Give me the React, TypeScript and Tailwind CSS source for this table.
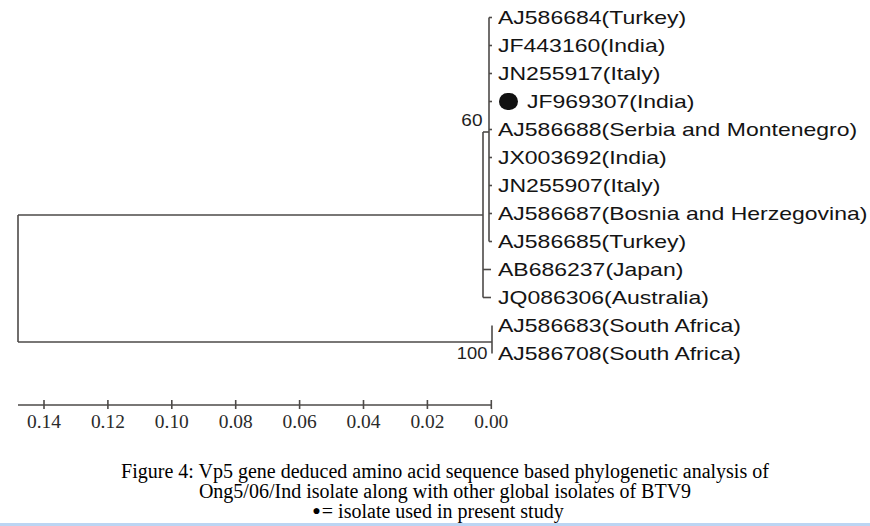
import React from "react";

const labels = [
  "AJ586684(Turkey)",
  "JF443160(India)",
  "JN255917(Italy)",
  "JF969307(India)",
  "AJ586688(Serbia and Montenegro)",
  "JX003692(India)",
  "JN255907(Italy)",
  "AJ586687(Bosnia and Herzegovina)",
  "AJ586685(Turkey)",
  "AB686237(Japan)",
  "JQ086306(Australia)",
  "AJ586683(South Africa)",
  "AJ586708(South Africa)",
];

const rowY = (i: number) => 17.5 + 28 * i;
const ticks = ["0.14", "0.12", "0.10", "0.08", "0.06", "0.04", "0.02", "0.00"];

export default function App() {
  const stroke = "#4d4a48";
  return (
    <div className="w-[870px] h-[526px] bg-white flex flex-col overflow-hidden">
      <div className="flex h-[370px]">
        <svg width={496} height={370} className="shrink-0">
          <g stroke={stroke} strokeWidth={1.6} fill="none">
            <line x1={18} y1={215} x2={18} y2={342} />
            <line x1={18} y1={215} x2={483} y2={215} />
            <line x1={18} y1={342} x2={492} y2={342} />
            <line x1={492} y1={rowY(11)} x2={492} y2={rowY(12)} />
            <line x1={483} y1={132} x2={483} y2={rowY(10)} />
            <line x1={483} y1={rowY(9)} x2={491} y2={rowY(9)} />
            <line x1={483} y1={rowY(10)} x2={491} y2={rowY(10)} />
            <line x1={483} y1={132} x2={489} y2={132} />
            <line x1={489} y1={rowY(0)} x2={489} y2={rowY(8)} />
            {[0, 1, 2, 3, 4, 5, 6, 7, 8].map((i) => (
              <line key={i} x1={489} y1={rowY(i)} x2={492} y2={rowY(i)} />
            ))}
          </g>
          <g transform="translate(482.5,126) scale(1.12,1)">
            <text textAnchor="end" fontSize={17} fill="#1e1e1e" fontFamily="'Liberation Sans', Arial, sans-serif">
              60
            </text>
          </g>
          <g transform="translate(487.5,359) scale(1.08,1)">
            <text textAnchor="end" fontSize={17} fill="#1e1e1e" fontFamily="'Liberation Sans', Arial, sans-serif">
              100
            </text>
          </g>
        </svg>
        <div className="flex flex-col pt-[3.5px] pl-[2px] font-['Liberation_Sans',Arial,sans-serif] text-[19px] text-[#141414]">
          {labels.map((l, i) => (
            <div key={l} className="h-[28px] flex items-center whitespace-nowrap">
              {i === 3 && (
                <span className="w-[19px] h-[17px] rounded-full bg-[#111] ml-[1px] mr-[9px] shrink-0" />
              )}
              <span className="inline-block origin-left scale-x-[1.21] leading-[28px]">{l}</span>
            </div>
          ))}
        </div>
      </div>
      <svg width={870} height={65} className="shrink-0">
        <g stroke={stroke} strokeWidth={1.6}>
          <line x1={18} y1={35} x2={492} y2={35} />
          {ticks.map((t, i) => {
            const x = 44 + i * 63.9;
            return <line key={t} x1={x} y1={30} x2={x} y2={39} />;
          })}
        </g>
        {ticks.map((t, i) => {
          const x = 44 + i * 63.9;
          return (
            <g key={t} transform={`translate(${x},58) scale(1.08,1)`}>
              <text
                textAnchor="middle"
                fontSize={18}
                fill="#2a2a2a"
                fontFamily="'Liberation Serif', 'Times New Roman', serif"
              >
                {t}
              </text>
            </g>
          );
        })}
      </svg>
      <div className="flex flex-col items-center pt-[26px] font-['Liberation_Serif','Times_New_Roman',serif] text-[20px] leading-[20px] text-black">
        <div className="pl-[20px] whitespace-nowrap">Figure 4: Vp5 gene deduced amino acid sequence based phylogenetic analysis of</div>
        <div className="pl-[20px] whitespace-nowrap">Ong5/06/Ind isolate along with other global isolates of BTV9</div>
        <div className="flex items-center pl-[6px] whitespace-nowrap">
          <span className="text-[14px] mr-[1px]">●</span>
          <span>= isolate used in present study</span>
        </div>
      </div>
      <div className="mt-auto h-[3px] bg-[#bcd5f3] shrink-0" />
    </div>
  );
}
